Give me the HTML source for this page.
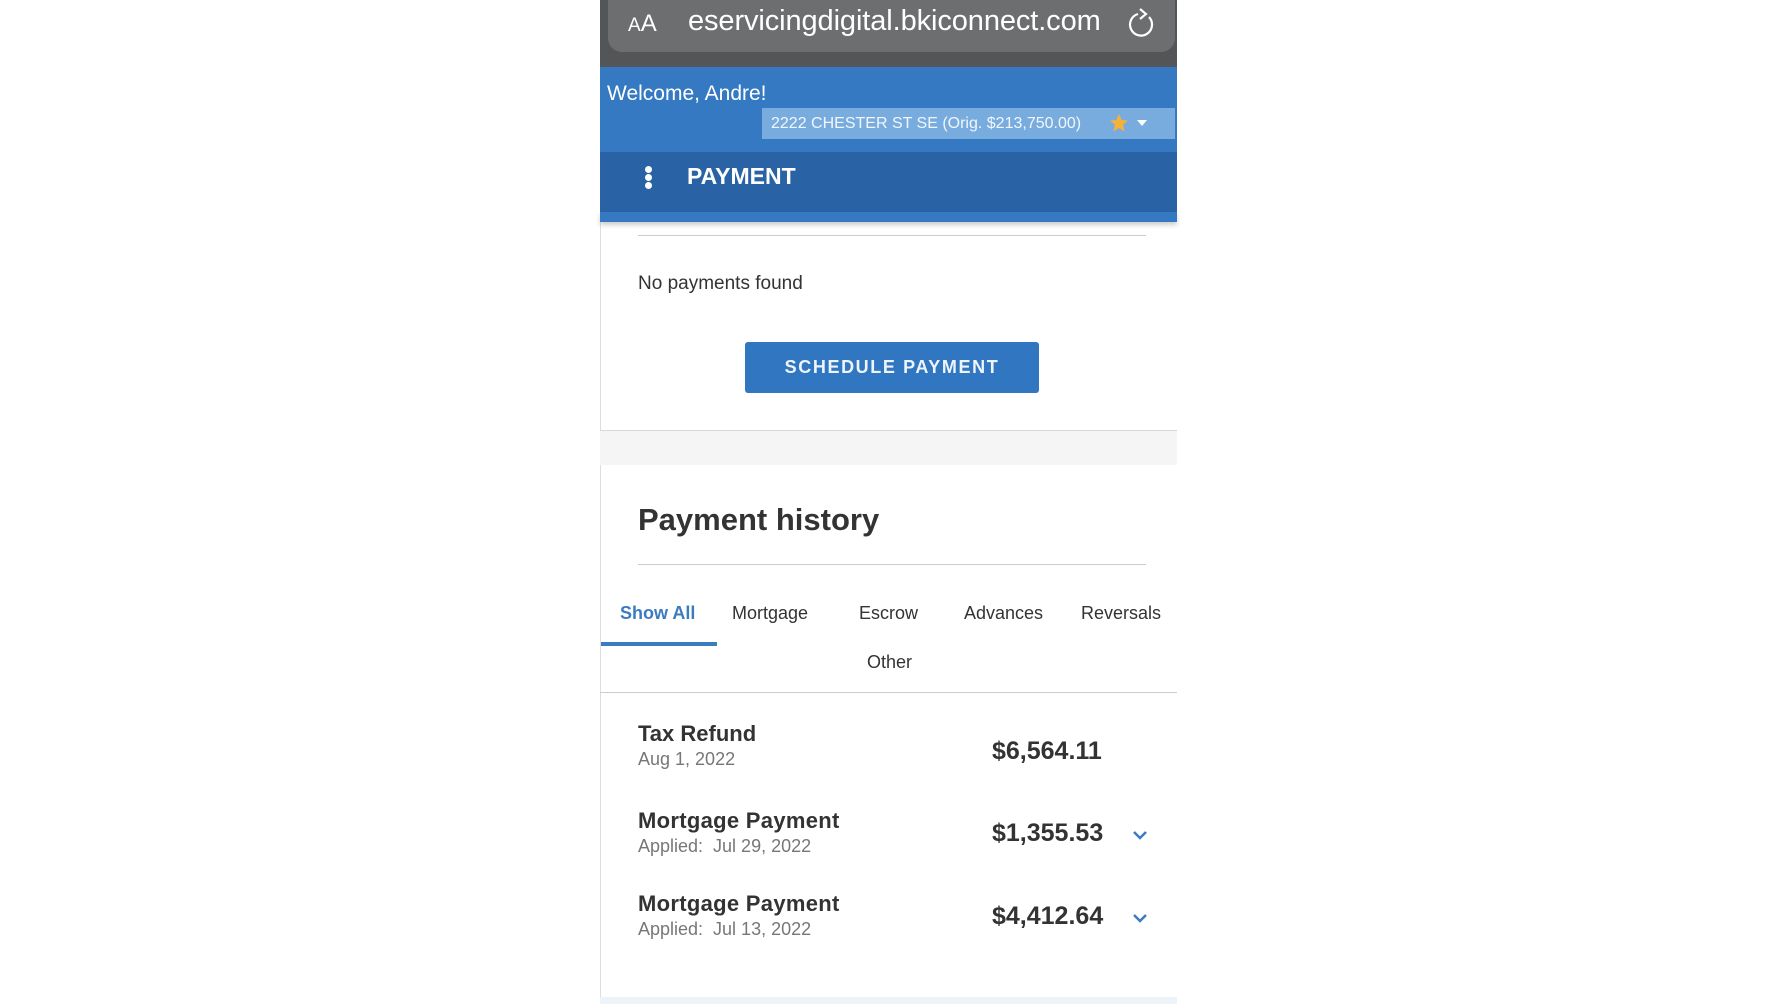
<!DOCTYPE html>
<html><head><meta charset="utf-8"><style>
*{margin:0;padding:0;box-sizing:border-box}
body{width:1778px;height:1000px;background:#fff;position:relative;overflow:hidden;font-family:"Liberation Sans",sans-serif}
#w{position:absolute;left:-4px;top:-4px;width:1778px;height:1008px}
.a{position:absolute;white-space:nowrap}
</style></head><body><div id="w">
<div class="a" style="left:604px;top:0;width:577px;height:1008px;background:#fff;border-left:1px solid #ddd"></div>
<div class="a" style="left:604px;top:0;width:577px;height:71px;background:#545556"></div>
<div class="a" style="left:612px;top:-10px;width:567px;height:66px;background:#6d6e70;border-radius:14px"></div>
<div class="a" style="left:632px;top:14px;color:#fff;font-size:24px"><span style="font-size:19px">A</span>A</div>
<div class="a" style="left:692px;top:9px;color:#fff;font-size:29px;letter-spacing:-0.1px">eservicingdigital.bkiconnect.com</div>
<svg class="a" style="left:1131px;top:11px" width="30" height="32" viewBox="0 0 30 32"><path d="M11 7 A11 11 0 1 0 22 10" fill="none" stroke="#fff" stroke-width="2.2"/><path d="M13 2 L19 7 L13 12" fill="none" stroke="#fff" stroke-width="2.2"/></svg>
<div class="a" style="left:604px;top:71px;width:577px;height:85px;background:#3479c2"></div>
<div class="a" style="left:611px;top:86px;color:#fff;font-size:21px">Welcome, Andre!</div>
<div class="a" style="left:766px;top:112px;width:413px;height:31px;background:#78acdf"></div>
<div class="a" style="left:775px;top:119px;color:#f2f6fb;font-size:16px">2222 CHESTER ST SE (Orig. $213,750.00)</div>
<svg class="a" style="left:1113px;top:117px" width="20" height="20" viewBox="0 0 20 20"><path d="M10 1 L12.6 7 L19 7.5 L14 11.8 L15.6 18.5 L10 15 L4.4 18.5 L6 11.8 L1 7.5 L7.4 7Z" fill="#f4b23a"/></svg>
<div class="a" style="left:1141px;top:124px;width:0;height:0;border-left:5px solid transparent;border-right:5px solid transparent;border-top:6px solid #fff"></div>
<div class="a" style="left:604px;top:156px;width:577px;height:60px;background:#2a62a6"></div>
<div class="a" style="left:604px;top:216px;width:577px;height:10px;background:#3479c2;box-shadow:0 3px 5px rgba(0,0,0,.2)"></div>
<div class="a" style="left:649px;top:170px;width:7px;height:7px;border-radius:50%;background:#fff;box-shadow:0 8px 0 #fff,0 16px 0 #fff"></div>
<div class="a" style="left:691px;top:167px;color:#fff;font-size:23px;font-weight:bold">PAYMENT</div>
<div class="a" style="left:642px;top:239px;width:508px;height:1px;background:#ccc"></div>
<div class="a" style="left:642px;top:277px;color:#333;font-size:19px">No payments found</div>
<div class="a" style="left:749px;top:346px;width:294px;height:51px;background:#3176c1;border-radius:3px;color:#eef4fb;font-size:18px;font-weight:bold;letter-spacing:1.6px;text-align:center;line-height:51px">SCHEDULE PAYMENT</div>
<div class="a" style="left:604px;top:434px;width:577px;height:35px;background:#f5f5f5;border-top:1px solid #d8d8d8"></div>
<div class="a" style="left:642px;top:506px;color:#333;font-size:31px;font-weight:bold">Payment history</div>
<div class="a" style="left:642px;top:568px;width:508px;height:1px;background:#ccc"></div>
<div class="a" style="left:624px;top:607px;color:#3b7cc0;font-size:18px;font-weight:bold">Show All</div>
<div class="a" style="left:736px;top:607px;color:#333;font-size:18px">Mortgage</div>
<div class="a" style="left:863px;top:607px;color:#333;font-size:18px">Escrow</div>
<div class="a" style="left:968px;top:607px;color:#333;font-size:18px">Advances</div>
<div class="a" style="left:1085px;top:607px;color:#333;font-size:18px">Reversals</div>
<div class="a" style="left:605px;top:646px;width:116px;height:4px;background:#3b7cc0"></div>
<div class="a" style="left:871px;top:656px;color:#333;font-size:18px">Other</div>
<div class="a" style="left:604px;top:696px;width:577px;height:1px;background:#ccc"></div>
<div class="a" style="left:642px;top:725px;color:#333;font-size:22px;font-weight:bold">Tax Refund</div>
<div class="a" style="left:642px;top:753px;color:#777;font-size:18px">Aug 1, 2022</div>
<div class="a" style="left:996px;top:741px;color:#333;font-size:25px;font-weight:bold">$6,564.11</div>
<div class="a" style="left:642px;top:812px;color:#333;font-size:22px;font-weight:bold;letter-spacing:0.3px">Mortgage Payment</div>
<div class="a" style="left:642px;top:840px;color:#777;font-size:18px">Applied:&nbsp; Jul 29, 2022</div>
<div class="a" style="left:996px;top:823px;color:#333;font-size:25px;font-weight:bold">$1,355.53</div>
<svg class="a" style="left:1136px;top:833px" width="16" height="12" viewBox="0 0 16 12"><path d="M2 3 L8 9 L14 3" fill="none" stroke="#3b7cc0" stroke-width="2.5"/></svg>
<div class="a" style="left:642px;top:895px;color:#333;font-size:22px;font-weight:bold;letter-spacing:0.3px">Mortgage Payment</div>
<div class="a" style="left:642px;top:923px;color:#777;font-size:18px">Applied:&nbsp; Jul 13, 2022</div>
<div class="a" style="left:996px;top:906px;color:#333;font-size:25px;font-weight:bold">$4,412.64</div>
<svg class="a" style="left:1136px;top:916px" width="16" height="12" viewBox="0 0 16 12"><path d="M2 3 L8 9 L14 3" fill="none" stroke="#3b7cc0" stroke-width="2.5"/></svg>
<div class="a" style="left:604px;top:1001px;width:577px;height:7px;background:#eef3fa"></div>
</div></body></html>
